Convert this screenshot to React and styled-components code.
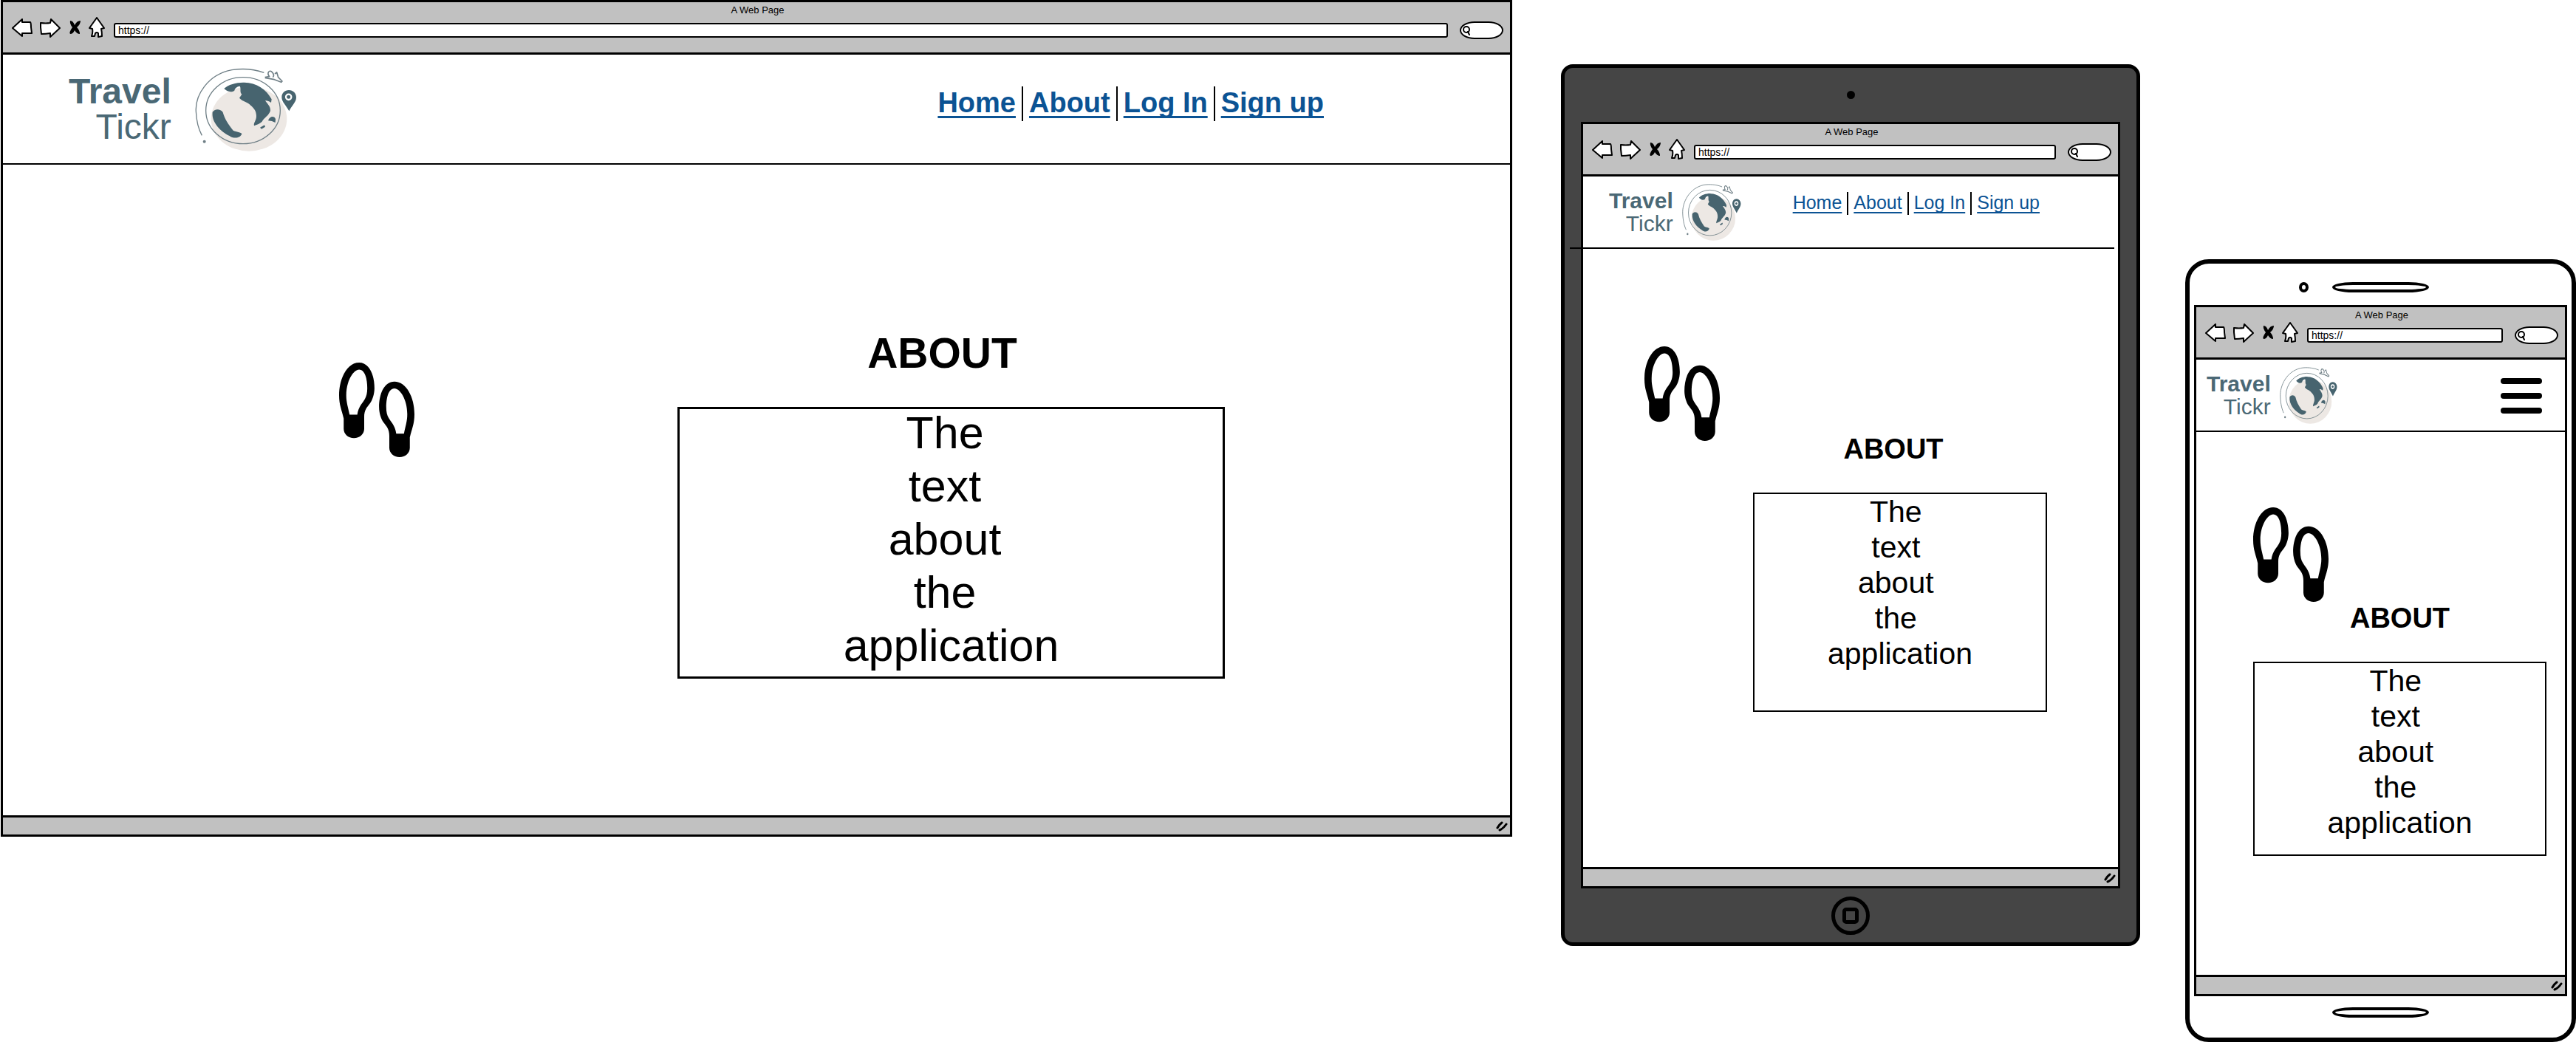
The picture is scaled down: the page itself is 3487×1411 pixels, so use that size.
import React from "react";
import styled, { createGlobalStyle } from "styled-components";

const GlobalStyle = createGlobalStyle`
  *, *::before, *::after { box-sizing: border-box; }
  body {
    margin: 0;
    background: #fff;
    color: #000;
    font-family: "Liberation Sans", Arial, sans-serif;
  }
  h1, p { margin: 0; }
  svg { display: block; }
  button { padding: 0; border: 0; background: none; cursor: pointer; }
`;

/* One entry per device size: the spacing that the page uses on it. */
const sizes = {
  desktop: {
    header: { height: 147, top: 17, left: 89, right: 252 },
    logo: { font: 48, line: 48, gap: 32, width: 138, height: 114 },
    nav: { font: 38, line: 44, weight: 700, top: 26, gap: 8, bar: 47, underline: 3 },
    main: { top: 223, bottom: 185, columns: "455fr 102px 356fr 741fr 386fr" },
    prints: 45,
    heading: { font: 57, line: 64, gap: 41, right: 24 },
    copy: { font: 61, line: 72, height: 368, border: 3, lift: 4 },
  },
  tablet: {
    header: { height: 96, top: 9, left: 35, right: 106 },
    logo: { font: 30, line: 31, gap: 12, width: 80, height: 78 },
    nav: { font: 25, line: 28, weight: 400, top: 12, gap: 7, bar: 31, underline: 2 },
    rule: "0 5px 0 -18px",
    main: { top: 132, bottom: 210, columns: "83fr 102px 45fr 397fr 96fr" },
    article: 117,
    heading: { font: 38, line: 44, gap: 37, right: 18 },
    copy: { font: 41, line: 48, height: 297, border: 2, lift: 0 },
  },
  phone: {
    header: { height: 96, top: 9, left: 14, right: 31 },
    logo: { font: 30, line: 31, gap: 12, width: 78, height: 78 },
    main: { top: 102, bottom: 161, columns: "77fr 397fr 25fr" },
    stacked: true,
    heading: { font: 38, line: 44, gap: 37, right: 0 },
    copy: { font: 41, line: 48, height: 263, border: 2, lift: 0 },
  },
};

const Board = styled.div`
  display: grid;
  grid-template-columns: 2047fr 66px 784fr 61px 529fr;
  align-items: start;
`;

const DesktopSlot = styled.section`
  grid-column: 1;
  padding-left: 1px;
`;

/* Devices */

const Tablet = styled.section`
  grid-column: 3;
  margin-top: 87px;
  padding: 0 22px;
  border: 5px solid #000;
  border-radius: 16px;
  background: #454545;
`;

const TabletBezel = styled.div`
  display: flex;
  align-items: center;
  justify-content: center;
  height: 73px;
`;

const TabletCamera = styled.span`
  width: 11px;
  height: 11px;
  border-radius: 50%;
  background: #000;
`;

const HomeButton = styled.button`
  display: flex;
  align-items: center;
  justify-content: center;
  width: 52px;
  height: 52px;
  border: 5px solid #000;
  border-radius: 50%;

  &::before {
    content: "";
    width: 22px;
    height: 22px;
    border: 5px solid #000;
    border-radius: 5px;
  }
`;

const Phone = styled.section`
  grid-column: 5;
  margin-top: 351px;
  padding: 0 6px;
  border: 6px solid #000;
  border-radius: 32px;
  background: #fff;
`;

const PhoneTop = styled.div`
  display: grid;
  grid-template-columns: 1fr 131px 1fr;
  column-gap: 32px;
  align-items: center;
  height: 56px;
  padding-top: 8px;
`;

const PhoneCamera = styled.span`
  justify-self: end;
  width: 13px;
  height: 14px;
  border: 4px solid #000;
  border-radius: 50%;
`;

const Slot = styled.span`
  display: block;
  width: 131px;
  height: 14px;
  border: 4px solid #000;
  border-radius: 32px / 8px;
`;

const PhoneBottom = styled.div`
  display: flex;
  justify-content: center;
  height: 56px;
  padding-top: 15px;
`;

/* Browser window */

const Window = styled.div`
  border: 3px solid #000;
  background: #fff;
`;

const Toolbar = styled.div`
  height: 71px;
  padding: 4px 9px 0 12px;
  border-bottom: 3px solid #000;
  background: #c1c1c1;
`;

const WindowTitle = styled.div`
  font-size: 13px;
  line-height: 14px;
  text-align: center;
`;

const Controls = styled.div`
  display: flex;
  align-items: center;
  gap: 10px;
`;

const ToolButton = styled.button`
  flex: none;
  width: ${(p) => p.$width}px;
  height: 28px;
`;

const Address = styled.input`
  flex: 1;
  min-width: 0;
  height: 20px;
  margin: 8px 6px 0 0;
  padding: 0 4px;
  border: 2px solid #000;
  border-radius: 3px;
  background: #fff;
  color: #000;
  font: 14px/16px "Liberation Sans", Arial, sans-serif;
`;

const SearchPill = styled.label`
  display: flex;
  flex: none;
  align-items: center;
  width: 59px;
  height: 24px;
  margin-top: 8px;
  padding-left: 2px;
  border: 2px solid #000;
  border-radius: 20px / 12px;
  background: #fff;
`;

const SearchField = styled.input`
  width: 36px;
  padding: 0;
  border: 0;
  outline: 0;
  background: none;
  font: 12px/16px "Liberation Sans", Arial, sans-serif;
`;

const StatusBar = styled.div`
  display: flex;
  justify-content: flex-end;
  align-items: center;
  height: 26px;
  padding-right: 3px;
  border-top: 3px solid #000;
  background: #c1c1c1;
`;

/* Site */

const SiteHeader = styled.header`
  display: flex;
  justify-content: space-between;
  align-items: flex-start;
  height: ${(p) => p.$s.height}px;
  padding: ${(p) => `${p.$s.top}px ${p.$s.right}px 0 ${p.$s.left}px`};
`;

const Rule = styled.hr`
  position: relative;
  height: 2px;
  margin: ${(p) => p.$margin || 0};
  border: 0;
  background: #000;
`;

const LogoLink = styled.a`
  display: flex;
  align-items: center;
  gap: ${(p) => p.$s.gap}px;
  color: #4a6875;
  font-size: ${(p) => p.$s.font}px;
  line-height: ${(p) => p.$s.line}px;
  text-decoration: none;
`;

const Wordmark = styled.span`
  display: flex;
  flex-direction: column;
  align-items: flex-end;
`;

const BrandStrong = styled.strong`
  font-weight: 700;
`;

const SiteNav = styled.nav`
  display: flex;
  gap: ${(p) => p.$s.gap}px;
  margin-top: ${(p) => p.$s.top}px;
  font-size: ${(p) => p.$s.font}px;
  font-weight: ${(p) => p.$s.weight};
  line-height: ${(p) => p.$s.line}px;
`;

const NavLink = styled.a`
  color: #0b5394;
  white-space: nowrap;
  text-decoration: underline;
  text-decoration-thickness: ${(p) => p.$s.underline}px;
  text-decoration-skip-ink: none;
  text-underline-offset: ${(p) => p.$s.underline + 2}px;
`;

const NavDivider = styled.span`
  width: 2px;
  height: ${(p) => p.$s.bar}px;
  background: #000;
`;

const MenuButton = styled.button`
  display: grid;
  gap: 12px;
  width: 56px;
  margin-top: 16px;
`;

const MenuBar = styled.span`
  height: 8px;
  border-radius: 4px;
  background: #000;
`;

const Main = styled.main`
  display: grid;
  grid-template-columns: ${(p) => p.$s.columns};
  align-items: start;
  padding: ${(p) => `${p.$s.top}px 0 ${p.$s.bottom}px`};
`;

const PrintsCell = styled.div`
  grid-column: 2;
  padding-top: ${(p) => p.$top || 0}px;
`;

const Article = styled.article`
  grid-column: ${(p) => (p.$stacked ? 2 : 4)};
  padding-top: ${(p) => p.$top || 0}px;
`;

const Heading = styled.h1`
  margin-bottom: ${(p) => p.$s.gap}px;
  padding-right: ${(p) => p.$s.right}px;
  font-size: ${(p) => p.$s.font}px;
  font-weight: 700;
  line-height: ${(p) => p.$s.line}px;
  text-align: center;
`;

const CopyBox = styled.div`
  min-height: ${(p) => p.$s.height}px;
  border: ${(p) => p.$s.border}px solid #000;
`;

const Copy = styled.p`
  margin-top: -${(p) => p.$s.lift}px;
  font-size: ${(p) => p.$s.font}px;
  line-height: ${(p) => p.$s.line}px;
  text-align: center;
  white-space: pre;
`;

/* Drawings */

const ink = {
  fill: "#fff",
  stroke: "#000",
  strokeWidth: 2,
  strokeLinejoin: "round",
  strokeLinecap: "round",
};

const BackIcon = () => (
  <svg width="28" height="27" viewBox="0 0 28 27" aria-hidden="true">
    <path {...ink} d="M1 14 L14 2 L14 6 L25 6 Q26 7 26 13 L27 21 L14 21 L14 25 Z" />
  </svg>
);

const ForwardIcon = () => (
  <svg width="28" height="27" viewBox="0 0 28 27" aria-hidden="true">
    <path {...ink} d="M27 14 L15 2 L14 7 Q8 8 1 7 L1 13 L2 22 Q8 22 14 21 L14 26 Z" />
  </svg>
);

const StopIcon = () => (
  <svg width="18" height="27" viewBox="0 0 18 27" aria-hidden="true">
    <path
      d="M3 4 Q7 4 9 10 Q12 4 17 4 Q17 9 12 13 Q16 17 16 22 Q12 22 9 17 Q7 22 3 22 Q1 20 6 13 Q2 8 3 4 Z"
      fill="#000"
    />
  </svg>
);

const HomeIcon = () => (
  <svg width="22" height="28" viewBox="0 0 22 28" aria-hidden="true">
    <path
      {...ink}
      d="M11 1 L1 15 L5 16 Q6 21 4 26 L8 26 L9 22 Q11 20 13 22 L13 27 L18 26 Q18 20 17 16 L21 15 Z"
    />
  </svg>
);

const SearchIcon = () => (
  <svg width="12" height="14" viewBox="0 0 12 14" aria-hidden="true">
    <ellipse cx="5" cy="6" rx="4" ry="4" fill="none" stroke="#000" strokeWidth="2" />
    <path d="M7 9 L9 13" stroke="#000" strokeWidth="2" strokeLinecap="round" />
  </svg>
);

const GripIcon = () => (
  <svg width="16" height="14" viewBox="0 0 16 14" aria-hidden="true">
    <path
      d="M2 9 Q4 5 8 2 M5 12 Q10 10 14 4"
      fill="none"
      stroke="#000"
      strokeWidth="3"
      strokeLinecap="round"
    />
  </svg>
);

const Globe = ({ width, height }) => (
  <svg width={width} height={height} viewBox="50 35 414 342" preserveAspectRatio="none" aria-hidden="true">
    <ellipse cx="269" cy="245" rx="154" ry="131" fill="#ede8e4" />
    <ellipse cx="245" cy="211" rx="151" ry="135" fill="none" stroke="#6f7f86" strokeWidth="4" />
    <path
      d="M330 57 C290 43 240 40 200 46 C100 65 50 150 54 215 C56 260 66 290 78 312"
      fill="none"
      stroke="#6f7f86"
      strokeWidth="4"
    />
    <circle cx="88" cy="337" r="6" fill="#6f7f86" />
    <g fill="#47646f">
      <path d="M168 122 C185 105 220 96 250 97 C300 98 340 125 361 165 L359 179 C350 172 342 170 335 171 C345 185 357 195 356 212 C350 232 330 240 322 256 C312 266 300 268 290 273 C286 262 300 250 299 232 C299 210 285 198 276 190 C265 176 245 176 230 160 L240 145 C230 136 238 122 232 112 C218 114 212 122 210 130 C195 140 178 132 168 122 Z" />
      <path d="M121 218 C128 204 152 202 163 218 C170 245 186 268 205 292 C218 299 238 298 240 306 C234 325 205 326 190 314 C156 298 116 260 121 218 Z" />
      <path d="M347 252 C352 234 372 230 377 246 L376 260 L362 254 Z" />
      <path d="M314 280 L332 270 L335 277 L320 286 Z" />
      <path d="M432 213 C420 190 402 176 402 157 C402 140 415 128 431 128 C448 128 461 141 461 157 C461 177 443 190 432 213 Z" />
    </g>
    <circle cx="430" cy="156" r="11" fill="none" stroke="#fff" strokeWidth="7" />
    <path
      d="M334 76 L352 73 C340 58 352 44 362 54 C370 62 372 70 366 76 M374 62 L382 56 L388 76 L404 92 L400 96 L372 85 L334 78"
      fill="none"
      stroke="#6f7f86"
      strokeWidth="5"
      strokeLinejoin="round"
    />
  </svg>
);

const Foot = () => (
  <path
    fillRule="evenodd"
    d="M393 109 C434 109 453 160 453 212 C453 235 445 260 436 272 C424 288 413 300 413 326 L413 375 C413 396 395 412 373 412 C351 412 333 396 333 375 L333 333 C326 300 315 280 315 240 C315 170 348 109 393 109 Z M393 137 C372 137 343 180 343 240 C343 270 351 290 356 318 L386 318 C390 285 409 268 415 256 C422 244 425 230 425 212 C425 180 418 137 393 137 Z"
  />
);

const Footprints = () => (
  <svg width="102" height="128" viewBox="315 109 294 379" preserveAspectRatio="none" role="img" aria-label="Footprints">
    <Foot />
    <g transform="translate(924 76) scale(-1 1)">
      <Foot />
    </g>
  </svg>
);

/* Assembly */

const links = ["Home", "About", "Log In", "Sign up"];
const words = ["The", "text", "about", "the", "application"];

function Navigation({ s }) {
  return (
    <SiteNav $s={s} aria-label="Main">
      {links.map((label, i) => (
        <React.Fragment key={label}>
          {i > 0 && <NavDivider $s={s} />}
          <NavLink href="#" $s={s}>
            {label}
          </NavLink>
        </React.Fragment>
      ))}
    </SiteNav>
  );
}

function BrowserWindow({ size }) {
  const s = sizes[size];
  return (
    <Window>
      <Toolbar>
        <WindowTitle>A Web Page</WindowTitle>
        <Controls>
          <ToolButton $width={28} aria-label="Back"><BackIcon /></ToolButton>
          <ToolButton $width={28} aria-label="Forward"><ForwardIcon /></ToolButton>
          <ToolButton $width={18} aria-label="Stop"><StopIcon /></ToolButton>
          <ToolButton $width={24} aria-label="Home page"><HomeIcon /></ToolButton>
          <Address aria-label="Address" defaultValue="https://" />
          <SearchPill>
            <SearchIcon />
            <SearchField aria-label="Search" />
          </SearchPill>
        </Controls>
      </Toolbar>
      <SiteHeader $s={s.header}>
        <LogoLink href="#" $s={s.logo}>
          <Wordmark>
            <BrandStrong>Travel</BrandStrong>
            <span>Tickr</span>
          </Wordmark>
          <Globe width={s.logo.width} height={s.logo.height} />
        </LogoLink>
        {s.nav ? (
          <Navigation s={s.nav} />
        ) : (
          <MenuButton aria-label="Menu">
            <MenuBar />
            <MenuBar />
            <MenuBar />
          </MenuButton>
        )}
      </SiteHeader>
      <Rule $margin={s.rule} />
      <Main $s={s.main}>
        <PrintsCell $top={s.prints}>
          <Footprints />
        </PrintsCell>
        <Article $stacked={s.stacked} $top={s.article}>
          <Heading $s={s.heading}>ABOUT</Heading>
          <CopyBox $s={s.copy}>
            <Copy $s={s.copy}>{words.join(" \n")}</Copy>
          </CopyBox>
        </Article>
      </Main>
      <StatusBar>
        <GripIcon />
      </StatusBar>
    </Window>
  );
}

export default function App() {
  return (
    <>
      <GlobalStyle />
      <Board>
        <DesktopSlot>
          <BrowserWindow size="desktop" />
        </DesktopSlot>
        <Tablet>
          <TabletBezel>
            <TabletCamera />
          </TabletBezel>
          <BrowserWindow size="tablet" />
          <TabletBezel>
            <HomeButton aria-label="Home button" />
          </TabletBezel>
        </Tablet>
        <Phone>
          <PhoneTop>
            <PhoneCamera />
            <Slot />
          </PhoneTop>
          <BrowserWindow size="phone" />
          <PhoneBottom>
            <Slot />
          </PhoneBottom>
        </Phone>
      </Board>
    </>
  );
}
